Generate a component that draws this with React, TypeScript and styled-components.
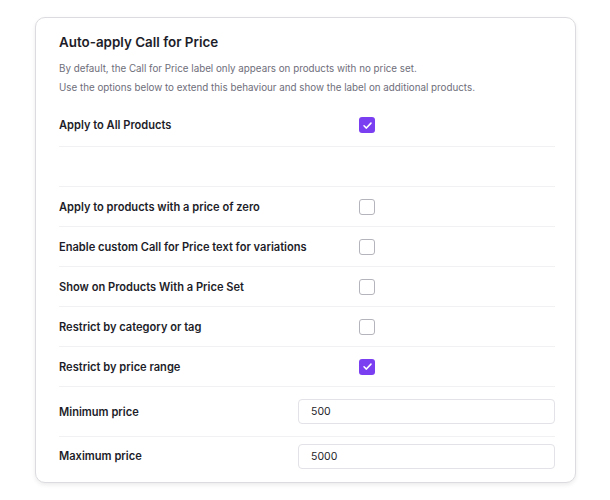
import styled, { createGlobalStyle } from "styled-components";

const GlobalStyle = createGlobalStyle`
  body {
    margin: 0;
    background: #ffffff;
    font-family: Inter, "Noto Sans", sans-serif;
    color: #1d1d29;
  }
`;

interface CheckOption {
  label: string;
  checked: boolean;
}

const options: CheckOption[] = [
  { label: "Apply to products with a price of zero", checked: false },
  { label: "Enable custom Call for Price text for variations", checked: false },
  { label: "Show on Products With a Price Set", checked: false },
  { label: "Restrict by category or tag", checked: false },
  { label: "Restrict by price range", checked: true },
];

const Check = ({ checked }: { checked: boolean }) => (
  <Box $checked={checked}>
    {checked && (
      <svg width="11" height="11" viewBox="0 0 12 12" fill="none">
        <path
          d="M2.2 6.3L4.8 8.8L9.8 3.4"
          stroke="#ffffff"
          strokeWidth="1.7"
          strokeLinecap="round"
          strokeLinejoin="round"
        />
      </svg>
    )}
  </Box>
);

const App = () => {
  return (
    <Page>
      <GlobalStyle />
      <Card>
        <Title>Auto-apply Call for Price</Title>
        <Desc>By default, the Call for Price label only appears on products with no price set.</Desc>
        <Desc>Use the options below to extend this behaviour and show the label on additional products.</Desc>
        <CheckRow $first>
          <Label>Apply to All Products</Label>
          <Check checked />
        </CheckRow>
        <Spacer />
        {options.map((o) => (
          <CheckRow key={o.label}>
            <Label>{o.label}</Label>
            <Check checked={o.checked} />
          </CheckRow>
        ))}
        <InputRow>
          <Label>Minimum price</Label>
          <Field defaultValue="500" />
        </InputRow>
        <InputRow $last>
          <Label>Maximum price</Label>
          <Field defaultValue="5000" />
        </InputRow>
      </Card>
    </Page>
  );
};

export default App;

const Page = styled.div`
  padding: 17px 33px 20px 35px;
`;

const Card = styled.div`
  width: 541px;
  box-sizing: border-box;
  border: 1px solid #dcdce0;
  border-radius: 10px;
  background: #ffffff;
  box-shadow: 0 2px 4px rgba(0, 0, 0, 0.08);
  padding: 16px 20px 7px 23px;
`;

const Title = styled.h2`
  margin: 0 0 11px;
  font-size: 13.4px;
  font-weight: 600;
  line-height: 16px;
  color: #1d1d29;
`;

const Desc = styled.p`
  margin: 0 0 3px;
  font-size: 9.8px;
  line-height: 16px;
  color: #6e6e7a;
`;

const CheckRow = styled.div<{ $first?: boolean }>`
  display: grid;
  grid-template-columns: 300px 16px;
  align-items: center;
  height: ${(p) => (p.$first ? 42 : 39)}px;
  margin-top: ${(p) => (p.$first ? 8 : 0)}px;
  border-bottom: 1px solid #f1f1f4;
`;

const Spacer = styled.div`
  height: 39px;
  border-bottom: 1px solid #f1f1f4;
`;

const InputRow = styled.div<{ $last?: boolean }>`
  display: grid;
  grid-template-columns: 239px 257px;
  align-items: center;
  height: ${(p) => (p.$last ? 38 : 49)}px;
  border-bottom: ${(p) => (p.$last ? "none" : "1px solid #f1f1f4")};
`;

const Label = styled.span`
  font-size: 11.1px;
  font-weight: 600;
  color: #1d1d29;
`;

const Box = styled.span<{ $checked: boolean }>`
  display: flex;
  align-items: center;
  justify-content: center;
  width: 16px;
  height: 16px;
  box-sizing: border-box;
  border-radius: 3px;
  background: ${(p) => (p.$checked ? "#7b3ff2" : "#ffffff")};
  border: ${(p) => (p.$checked ? "none" : "1.5px solid #b4b4bc")};
`;

const Field = styled.input`
  box-sizing: border-box;
  width: 257px;
  height: 25px;
  border: 1px solid #e2e2e8;
  border-radius: 4px;
  padding: 0 12px;
  font-family: Inter, "Noto Sans", sans-serif;
  font-size: 10.5px;
  color: #1d1d29;
  outline: none;
`;
